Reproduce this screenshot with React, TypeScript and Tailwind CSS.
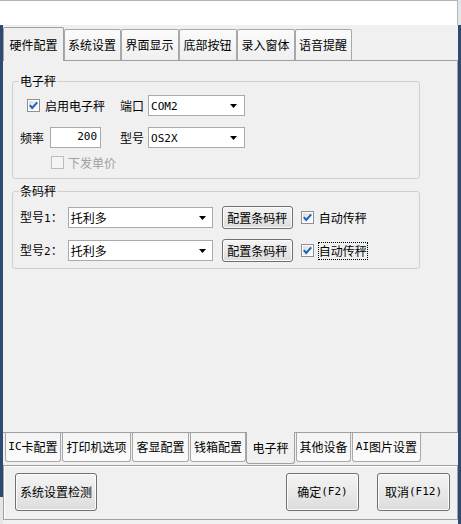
import React from "react";

const M = ({ children }: { children: React.ReactNode }) => (
  <span className="font-['DejaVu_Sans_Mono',monospace] text-[11px]">{children}</span>
);

const Arrow = () => (
  <svg width="7" height="4" viewBox="0 0 7 4" className="shrink-0">
    <polygon points="0,0 7,0 3.5,4" fill="#000" />
  </svg>
);

const Combo = ({ w, pr, children }: { w: string; pr: string; children: React.ReactNode }) => (
  <div className={`flex items-center justify-between h-[21px] border border-[#a9a9a9] bg-white pl-[2px] ${w} ${pr}`}>
    <span className="leading-[16px]">{children}</span>
    <Arrow />
  </div>
);

const Check = ({ checked = false, disabled = false }: { checked?: boolean; disabled?: boolean }) => (
  <svg width="13" height="13" viewBox="0 0 13 13" className="shrink-0">
    <defs>
      <linearGradient id="cbg" x1="0" y1="0" x2="1" y2="1">
        <stop offset="0" stopColor="#dcdcdc" />
        <stop offset="1" stopColor="#ffffff" />
      </linearGradient>
    </defs>
    <rect x="0.5" y="0.5" width="12" height="12" fill={disabled ? "#f4f4f4" : "#ffffff"} stroke={disabled ? "#bcbcbc" : "#8f8f8f"} />
    {!disabled && <rect x="2" y="2" width="9" height="9" fill="url(#cbg)" />}
    {checked && (
      <path d="M2.8 6.2 L5.2 9 L10.2 3.4" fill="none" stroke="#1a62c6" strokeWidth="2" />
    )}
  </svg>
);

const Btn = ({ cls, children }: { cls: string; children: React.ReactNode }) => (
  <div
    className={`flex items-center justify-center border border-[#707070] rounded-[3px] bg-gradient-to-b from-[#f3f3f3] via-[#e9e9e9] to-[#dcdcdc] shadow-[inset_0_0_0_1px_#fcfcfc] ${cls}`}
  >
    {children}
  </div>
);

const topTabs: { label: string; w: string }[] = [
  { label: "硬件配置", w: "w-[61px]" },
  { label: "系统设置", w: "w-[57px]" },
  { label: "界面显示", w: "w-[58px]" },
  { label: "底部按钮", w: "w-[58px]" },
  { label: "录入窗体", w: "w-[58px]" },
  { label: "语音提醒", w: "w-[57px]" },
];

export default function App() {
  return (
    <div className="w-[461px] h-[524px] flex flex-col bg-[#f0f0f0] overflow-hidden text-[12px] text-black font-['Noto_Sans_CJK_SC',sans-serif]">
      {/* top white area */}
      <div className="flex h-[25px] shrink-0">
        <div className="w-[458px] bg-white border-r border-t border-[#b4b4b4]" />
        <div className="flex-1 bg-[#e4e7ea]" />
      </div>

      <div className="flex flex-1 min-h-0">
        <div className="w-[3px] flex flex-col">
          <div className="h-[472px] bg-[#2c4b73]" />
          <div className="flex-1 bg-[#e6e6e6]" />
        </div>

        <div className="w-[455px] flex flex-col">
          {/* top tab strip */}
          <div className="h-[35px] flex items-end shrink-0">
            {topTabs.map((t, i) =>
              i === 0 ? (
                <div
                  key={t.label}
                  className={`relative z-10 -mb-[1px] h-[34px] ${t.w} flex items-center justify-center border border-b-0 border-[#a0a0a0] rounded-t-[2px] bg-[#f0f0f0]`}
                >
                  {t.label}
                </div>
              ) : (
                <div
                  key={t.label}
                  className={`h-[31px] ${t.w} flex items-center justify-center border border-b-0 border-l-0 border-[#a8a8a8] rounded-t-[2px] bg-gradient-to-b from-[#fbfbfb] to-[#efefef] shadow-[inset_1px_0_0_#a8a8a8]`}
                >
                  {t.label}
                </div>
              )
            )}
          </div>

          {/* main panel */}
          <div className="h-[373px] shrink-0 border-t border-b border-r border-[#a0a0a0] bg-[#f0f0f0] pl-[9px]">
            <fieldset className="mt-[12px] w-[408px] border border-[#d0d0d0] rounded-[3px] pb-[9px]">
              <legend className="ml-[6px] px-[1px] leading-[16px]">电子秤</legend>
              <div className="pt-[6px]">
                <div className="flex items-center h-[21px]">
                  <div className="ml-[14px]">
                    <Check checked />
                  </div>
                  <span className="ml-[5px]">启用电子秤</span>
                  <span className="ml-[15px]">端口</span>
                  <div className="ml-[4px]">
                    <Combo w="w-[97px]" pr="pr-[7px]">
                      <M>COM2</M>
                    </Combo>
                  </div>
                </div>
                <div className="flex items-center h-[21px] mt-[11px]">
                  <span className="ml-[7px]">频率</span>
                  <div className="ml-[6px] w-[51px] h-[21px] border border-[#a9a9a9] bg-white flex items-center justify-end pr-[3px]">
                    <M>200</M>
                  </div>
                  <span className="ml-[19px]">型号</span>
                  <div className="ml-[4px]">
                    <Combo w="w-[97px]" pr="pr-[7px]">
                      <M>OS2X</M>
                    </Combo>
                  </div>
                </div>
                <div className="flex items-center h-[13px] mt-[8px]">
                  <div className="ml-[38px]">
                    <Check disabled />
                  </div>
                  <span className="ml-[4px] text-[#a0a0a0]">下发单价</span>
                </div>
              </div>
            </fieldset>

            <fieldset className="mt-[4px] w-[408px] border border-[#d0d0d0] rounded-[3px] pb-[6px]">
              <legend className="ml-[6px] px-[1px] leading-[16px]">条码秤</legend>
              <div className="pt-[7px]">
                {[1, 2].map((n) => (
                  <div key={n} className={`flex items-center h-[23px] ${n === 2 ? "mt-[10px]" : ""}`}>
                    <span className="ml-[7px]">
                      型号<M>{n}</M>：
                    </span>
                    <div className="ml-[5px]">
                      <Combo w="w-[145px]" pr="pr-[6px]">
                        托利多
                      </Combo>
                    </div>
                    <Btn cls="ml-[9px] w-[71px] h-[23px]">配置条码秤</Btn>
                    <div className="ml-[8px]">
                      <Check checked />
                    </div>
                    <span
                      className={`ml-[5px] leading-[16px] ${n === 2 ? "outline outline-1 outline-dotted outline-black" : ""}`}
                    >
                      自动传秤
                    </span>
                  </div>
                ))}
              </div>
            </fieldset>
          </div>

          {/* bottom tabs */}
          <div className="h-[32px] shrink-0 flex items-start pl-[2px] gap-[1px]">
            {[
              { l: <><M>IC</M>卡配置</>, w: "w-[56px]" },
              { l: "打印机选项", w: "w-[69px]" },
              { l: "客显配置", w: "w-[57px]" },
              { l: "钱箱配置", w: "w-[56px]" },
            ].map((t, i) => (
              <div
                key={i}
                className={`h-[29px] ${t.w} flex items-center justify-center border border-t-0 border-[#a8a8a8] rounded-b-[3px] bg-gradient-to-b from-[#f4f4f4] to-[#fbfbfb]`}
              >
                {t.l}
              </div>
            ))}
            <div className="relative z-10 -mt-[1px] -ml-[1px] h-[32px] w-[49px] flex items-center justify-center border border-t-0 border-[#a0a0a0] rounded-b-[3px] bg-[#f0f0f0]">
              电子秤
            </div>
            {[
              { l: "其他设备", w: "w-[55px]" },
              { l: <><M>AI</M>图片设置</>, w: "w-[69px]" },
            ].map((t, i) => (
              <div
                key={i}
                className={`h-[29px] ${t.w} flex items-center justify-center border border-t-0 border-[#a8a8a8] rounded-b-[3px] bg-gradient-to-b from-[#f4f4f4] to-[#fbfbfb]`}
              >
                {t.l}
              </div>
            ))}
          </div>

          {/* button panel */}
          <div className="h-[55px] shrink-0 border border-[#a0a0a0] shadow-[inset_1px_1px_0_#ffffff] flex items-start pt-[7px] pl-[11px] pr-[7px]">
            <Btn cls="w-[82px] h-[38px]">系统设置检测</Btn>
            <div className="flex-1" />
            <Btn cls="w-[73px] h-[38px]">
              确定<M>(F2)</M>
            </Btn>
            <Btn cls="ml-[18px] w-[73px] h-[38px]">
              取消<M>(F12)</M>
            </Btn>
          </div>
          <div className="flex-1" />
        </div>

        <div className="flex-1 bg-[#2c4b73]" />
      </div>
    </div>
  );
}
